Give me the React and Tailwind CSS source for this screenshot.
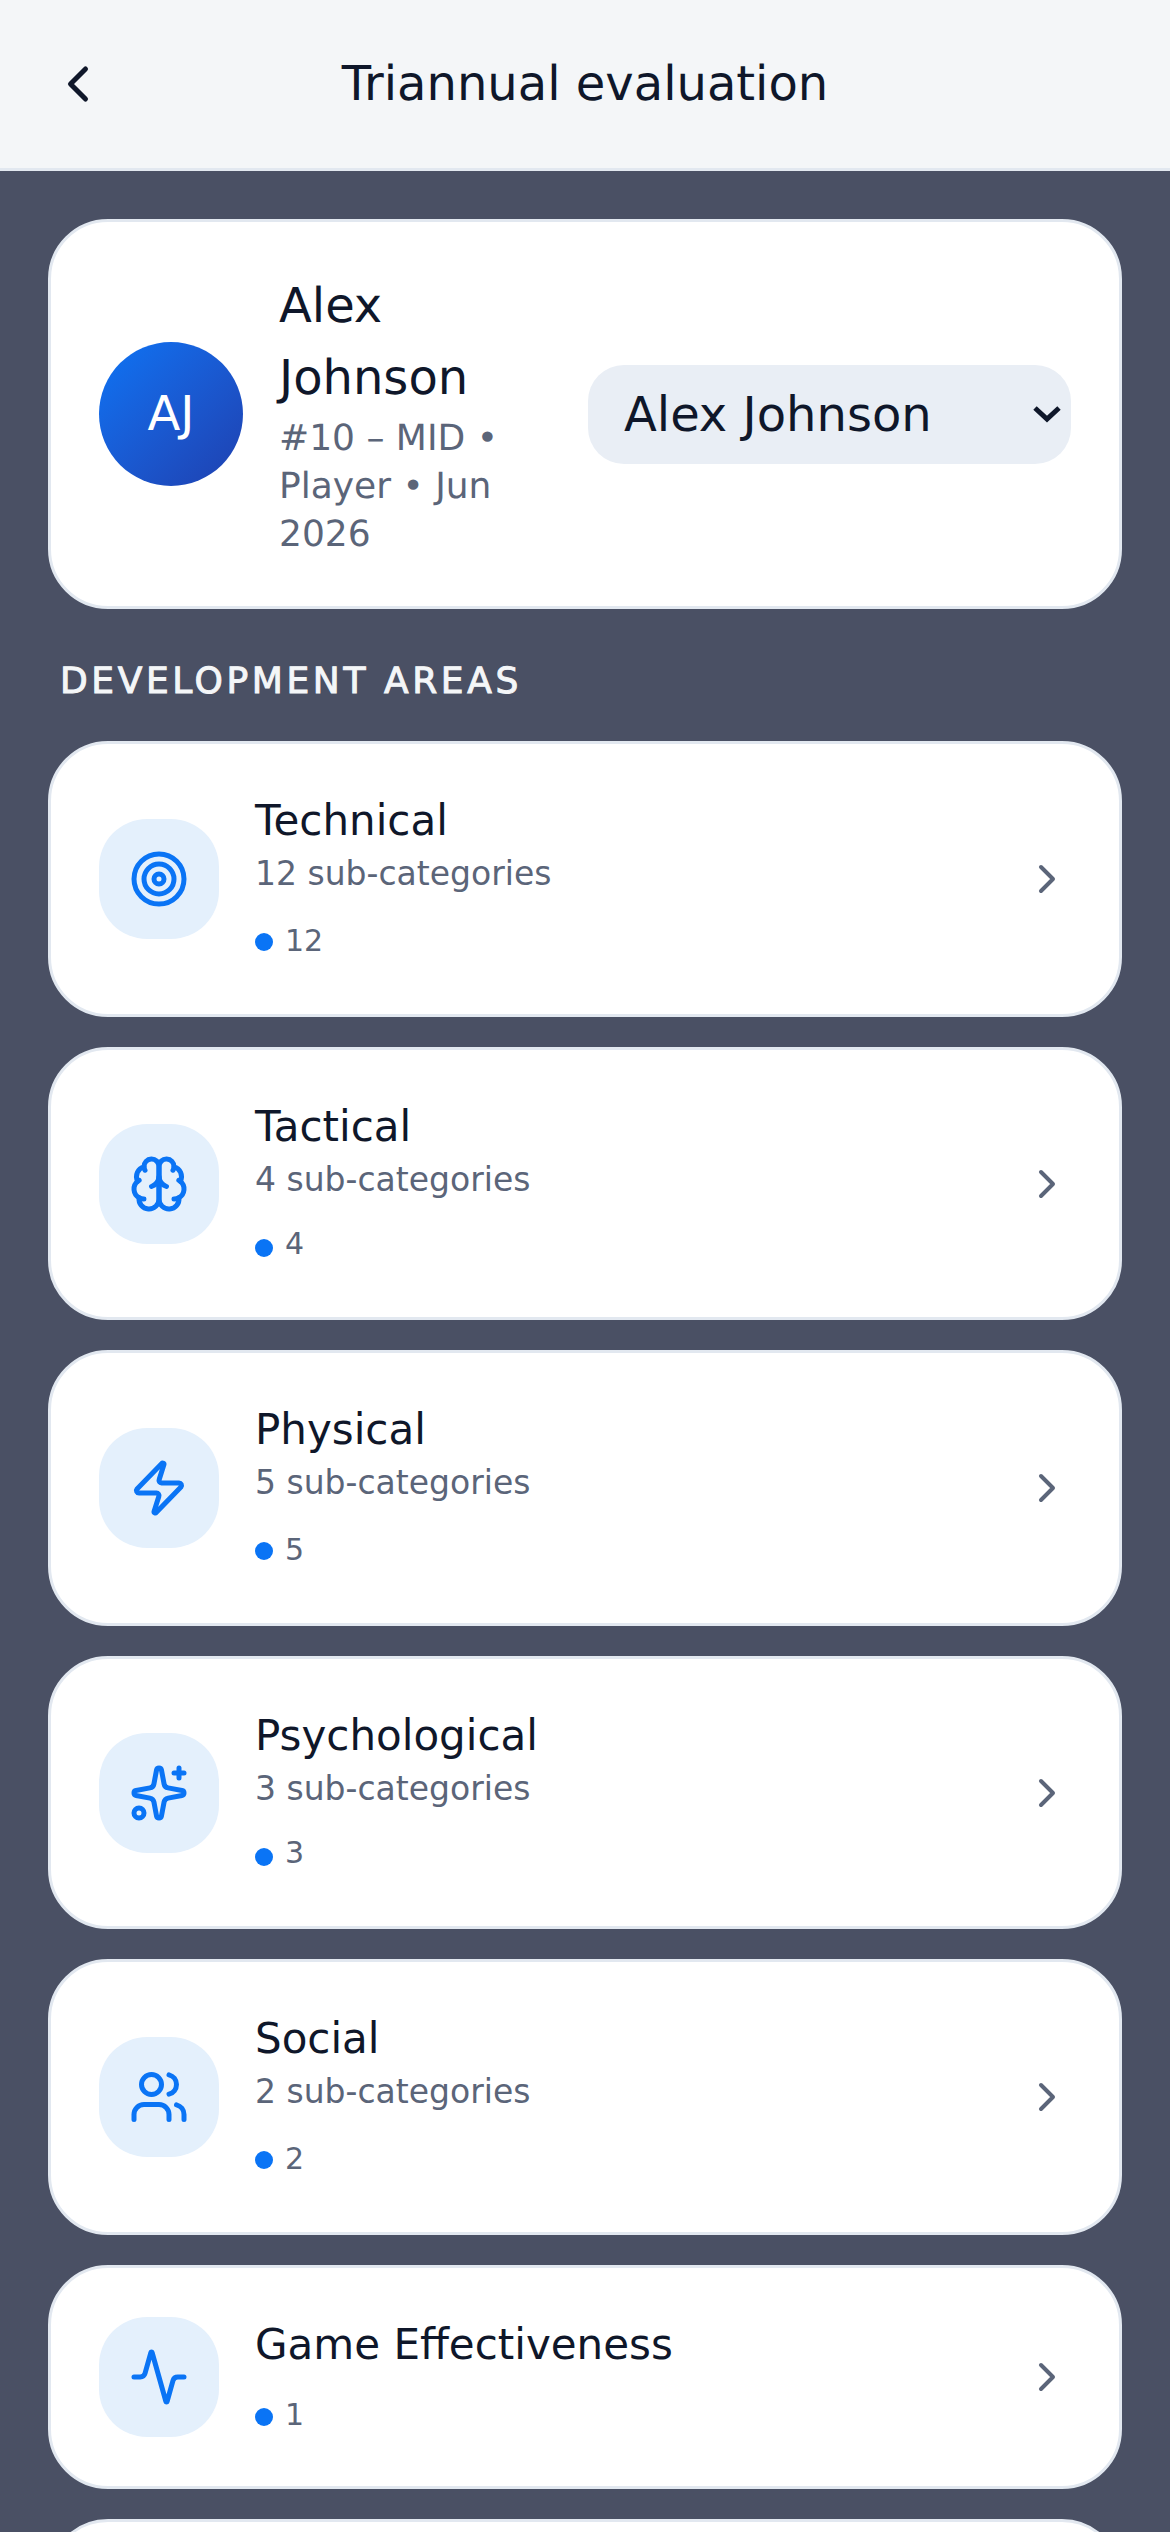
import React from "react";
import { Activity, ChevronLeft, ChevronRight, Sparkles, Target, Users, Zap } from "lucide-react";

// lucide's older brain outline, the one in the design
function BrainIcon({ size, className }) {
  return (
    <svg
      width={size}
      height={size}
      viewBox="0 0 24 24"
      fill="none"
      stroke="currentColor"
      strokeWidth="2"
      strokeLinecap="round"
      strokeLinejoin="round"
      className={className}
    >
      <path d="M12 5a3 3 0 1 0-5.997.125 4 4 0 0 0-2.526 5.77 4 4 0 0 0 .556 6.588A4 4 0 1 0 12 18Z" />
      <path d="M12 5a3 3 0 1 1 5.997.125 4 4 0 0 1 2.526 5.77 4 4 0 0 1-.556 6.588A4 4 0 1 1 12 18Z" />
      <path d="M15 13a4.5 4.5 0 0 1-3-4 4.5 4.5 0 0 1-3 4" />
      <path d="M17.599 6.5a3 3 0 0 0 .399-1.375" />
      <path d="M6.003 5.125A3 3 0 0 0 6.401 6.5" />
      <path d="M3.477 10.896a4 4 0 0 1 .585-.396" />
      <path d="M19.938 10.5a4 4 0 0 1 .585.396" />
      <path d="M6 18a4 4 0 0 1-1.967-.516" />
      <path d="M19.967 17.484A4 4 0 0 1 18 18" />
    </svg>
  );
}

const AREAS = [
  { name: "Technical", sub: "12 sub-categories", count: 12, Icon: Target, row: "h-[45px]", digit: "leading-[39px]" },
  { name: "Tactical", sub: "4 sub-categories", count: 4, Icon: BrainIcon, row: "h-[42px]", digit: "leading-[33px]" },
  { name: "Physical", sub: "5 sub-categories", count: 5, Icon: Zap, row: "h-[45px]", digit: "leading-[39px]" },
  { name: "Psychological", sub: "3 sub-categories", count: 3, Icon: Sparkles, row: "h-[42px]", digit: "leading-[33px]" },
  { name: "Social", sub: "2 sub-categories", count: 2, Icon: Users, row: "h-[45px]", digit: "leading-[39px]" },
  { name: "Game Effectiveness", count: 1, Icon: Activity, row: "h-[42px]", digit: "leading-[37px]" },
];

function AreaCard({ name, sub, count, Icon, row, digit }) {
  return (
    <button
      type="button"
      className="flex w-full items-center gap-9 rounded-[60px] border-[3px] border-[#e2e8f0] bg-white p-12 text-left"
    >
      <div className="flex h-[120px] w-[120px] shrink-0 items-center justify-center rounded-[48px] bg-[#e4f0fc]">
        <Icon size={60} className="text-[#0a74f5]" />
      </div>
      <div className="min-w-0 flex-1">
        <div className="text-[42px] leading-[57px] text-[#0f172a]">{name}</div>
        {sub && <div className="text-[33px] leading-[49px] text-[#5b6579]">{sub}</div>}
        <div className={`mt-[23px] flex items-start gap-3 text-[30px] text-[#5b6579] ${row}`}>
          <span className="mt-3 h-[18px] w-[18px] rounded-full bg-[#0a74f5]" />
          <span className={digit}>{count}</span>
        </div>
      </div>
      <ChevronRight size={48} className="shrink-0 text-[#5b6579]" />
    </button>
  );
}

export default function App() {
  return (
    <div className="h-[2532px] overflow-hidden bg-[#4a5064] font-['DejaVu_Sans',sans-serif] [text-rendering:geometricPrecision]">
      <header className="relative flex h-[171px] items-center justify-center border-b-[3px] border-[#e2e8f0] bg-[#f4f6f8]">
        <ChevronLeft size={60} className="absolute left-[48px] text-[#0f172a]" />
        <h1 className="text-[48px] font-normal text-[#0f172a]">Triannual evaluation</h1>
      </header>

      <main className="flex flex-col px-12 pt-12">
        <section className="flex items-center gap-9 rounded-[60px] border-[3px] border-[#e2e8f0] bg-white p-12">
          <div className="flex h-[144px] w-[144px] shrink-0 items-center justify-center rounded-full bg-gradient-to-br from-[#0a74f5] to-[#1e40af] text-[48px] text-white">
            AJ
          </div>
          <div className="min-w-0 flex-1">
            <div className="text-[48px] leading-[72px] text-[#0f172a]">Alex Johnson</div>
            <div className="mt-px -mb-px text-[36px] leading-[48px] text-[#5b6579]">#10 – MID • Player • Jun 2026</div>
          </div>
          <div className="relative w-[483px] shrink-0">
            <select className="h-[99px] w-full appearance-none rounded-[36px] bg-[#e9eef5] pl-9 text-[48px] text-[#0f172a] outline-none">
              <option>Alex Johnson</option>
            </select>
            <svg
              viewBox="0 0 28 18"
              className="pointer-events-none absolute top-10 right-[10px] h-[18px] w-[28px] text-[#0f172a]"
              fill="none"
              stroke="currentColor"
              strokeWidth="5"
            >
              <path d="M2 3l12 11L26 3" />
            </svg>
          </div>
        </section>

        <h2 className="mt-[49px] mb-[35px] px-3 text-[36px] leading-[48px] font-normal tracking-[3.6px] text-[#f4f6f8] [-webkit-text-stroke:1px_#f4f6f8]">
          DEVELOPMENT AREAS
        </h2>

        <div className="flex flex-col gap-[30px]">
          {AREAS.map((area) => (
            <AreaCard key={area.name} {...area} />
          ))}
          <div className="h-[200px] shrink-0 rounded-[60px] border-[3px] border-[#e2e8f0] bg-white" />
        </div>
      </main>
    </div>
  );
}
